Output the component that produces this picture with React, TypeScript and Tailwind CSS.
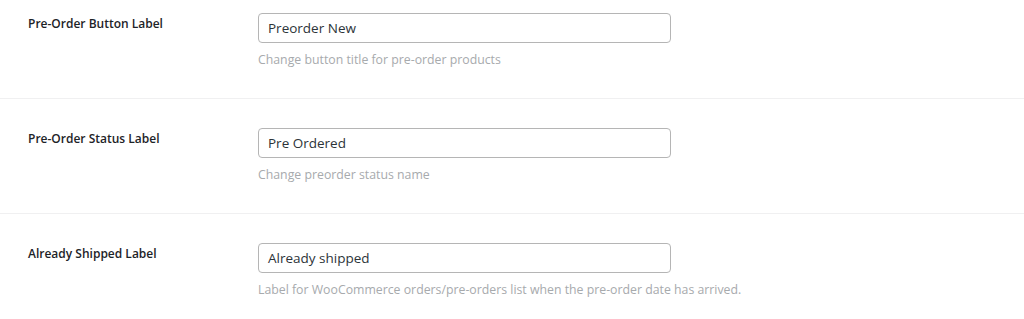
import React from "react";

const rows = [
  { label: "Pre-Order Button Label", value: "Preorder New", desc: "Change button title for pre-order products", first: true },
  { label: "Pre-Order Status Label", value: "Pre Ordered", desc: "Change preorder status name", first: false },
  { label: "Already Shipped Label", value: "Already shipped", desc: "Label for WooCommerce orders/pre-orders list when the pre-order date has arrived.", first: false },
];

export default function App() {
  return (
    <div className="w-[1024px] h-[319px] overflow-hidden bg-white" style={{ fontFamily: '"Open Sans", "Noto Sans", sans-serif' }}>
      {rows.map((r, i) => (
        <div
          key={i}
          className={`flex border-b border-[#f0f0f1] pb-[30px] ${r.first ? "pt-[13px]" : "pt-[29px]"}`}
        >
          <div className="w-[258px] shrink-0 pl-[28px] pt-[2px] text-[12px] font-semibold text-[#1d2327] leading-[18px]">
            {r.label}
          </div>
          <div className="flex flex-col">
            <div className="w-[413px] h-[30px] rounded-[4px] border border-[#b5b5b5] px-[9px] flex items-center text-[13.5px] text-[#2c3338]">
              {r.value}
            </div>
            <div className="mt-[8px] text-[12.3px] leading-[17px] text-[#a7aaad]">{r.desc}</div>
          </div>
        </div>
      ))}
    </div>
  );
}
